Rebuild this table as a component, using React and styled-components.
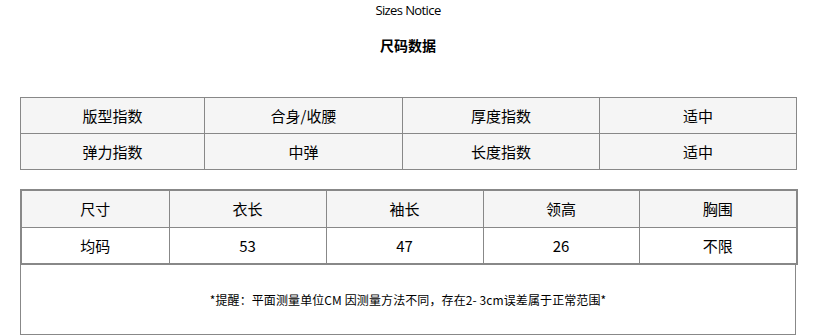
import React from 'react';
import styled, { createGlobalStyle } from 'styled-components';

const GlobalStyle = createGlobalStyle`
  body {
    margin: 0;
    background: #fff;
    font-family: "Microsoft YaHei", "Noto Sans CJK SC", "Liberation Sans", sans-serif;
    color: #000;
  }
`

const Page = styled.div`
  width: 814px;
  padding: 1px 18px 0 20px;
  box-sizing: border-box;
`

const Title = styled.div`
  text-align: center;
  font-family: "Open Sans", "Noto Sans CJK SC", sans-serif;
  font-size: 13px;
  letter-spacing: -0.6px;
  line-height: 18px;
`

const SubTitle = styled.div`
  text-align: center;
  font-size: 14px;
  font-weight: bold;
  line-height: 20px;
  margin-top: 16px;
  margin-bottom: 42px;
`

const Table = styled.table`
  width: 776px;
  border-collapse: collapse;
  table-layout: fixed;
  border: ${p => p.$thick ? '2px' : '1px'} solid #888;
  margin-bottom: ${p => p.$gap || 0}px;
`

const Col = styled.col`
  width: ${p => p.$w}px;
`

const Cell = styled.td`
  border: 1px solid #888;
  height: ${p => p.$h || 35}px;
  padding: 0;
  text-align: center;
  font-size: 15px;
  line-height: 20px;
  background: ${p => p.$light ? '#fff' : '#f5f5f5'};
`

const Note = styled.div`
  width: 776px;
  box-sizing: border-box;
  height: 70px;
  border: 1px solid #888;
  border-top: none;
  display: flex;
  align-items: center;
  justify-content: center;
  font-size: 12px;
  letter-spacing: 0.1px;
`

const fitCols = [184, 198, 197, 197];
const fitRows = [
  ['版型指数', '合身/收腰', '厚度指数', '适中'],
  ['弹力指数', '中弹', '长度指数', '适中'],
];

const sizeCols = [148, 157, 157, 156, 158];
const sizeHead = ['尺寸', '衣长', '袖长', '领高', '胸围'];
const sizeRow = ['均码', '53', '47', '26', '不限'];

function App() {
  return (
    <Page>
      <GlobalStyle />
      <Title>Sizes Notice</Title>
      <SubTitle>尺码数据</SubTitle>

      <Table $gap={19}>
        <colgroup>
          {fitCols.map((w, i) => <Col key={i} $w={w} />)}
        </colgroup>
        <tbody>
          {fitRows.map((row, i) => (
            <tr key={i}>
              {row.map((c, j) => <Cell key={j}>{c}</Cell>)}
            </tr>
          ))}
        </tbody>
      </Table>

      <Table $thick>
        <colgroup>
          {sizeCols.map((w, i) => <Col key={i} $w={w} />)}
        </colgroup>
        <tbody>
          <tr>
            {sizeHead.map((c, j) => <Cell key={j} $h={36}>{c}</Cell>)}
          </tr>
          <tr>
            {sizeRow.map((c, j) => <Cell key={j} $h={35} $light>{c}</Cell>)}
          </tr>
        </tbody>
      </Table>
      <Note>*提醒：平面测量单位CM 因测量方法不同，存在2- 3cm误差属于正常范围*</Note>
    </Page>
  );
}

export default App;
